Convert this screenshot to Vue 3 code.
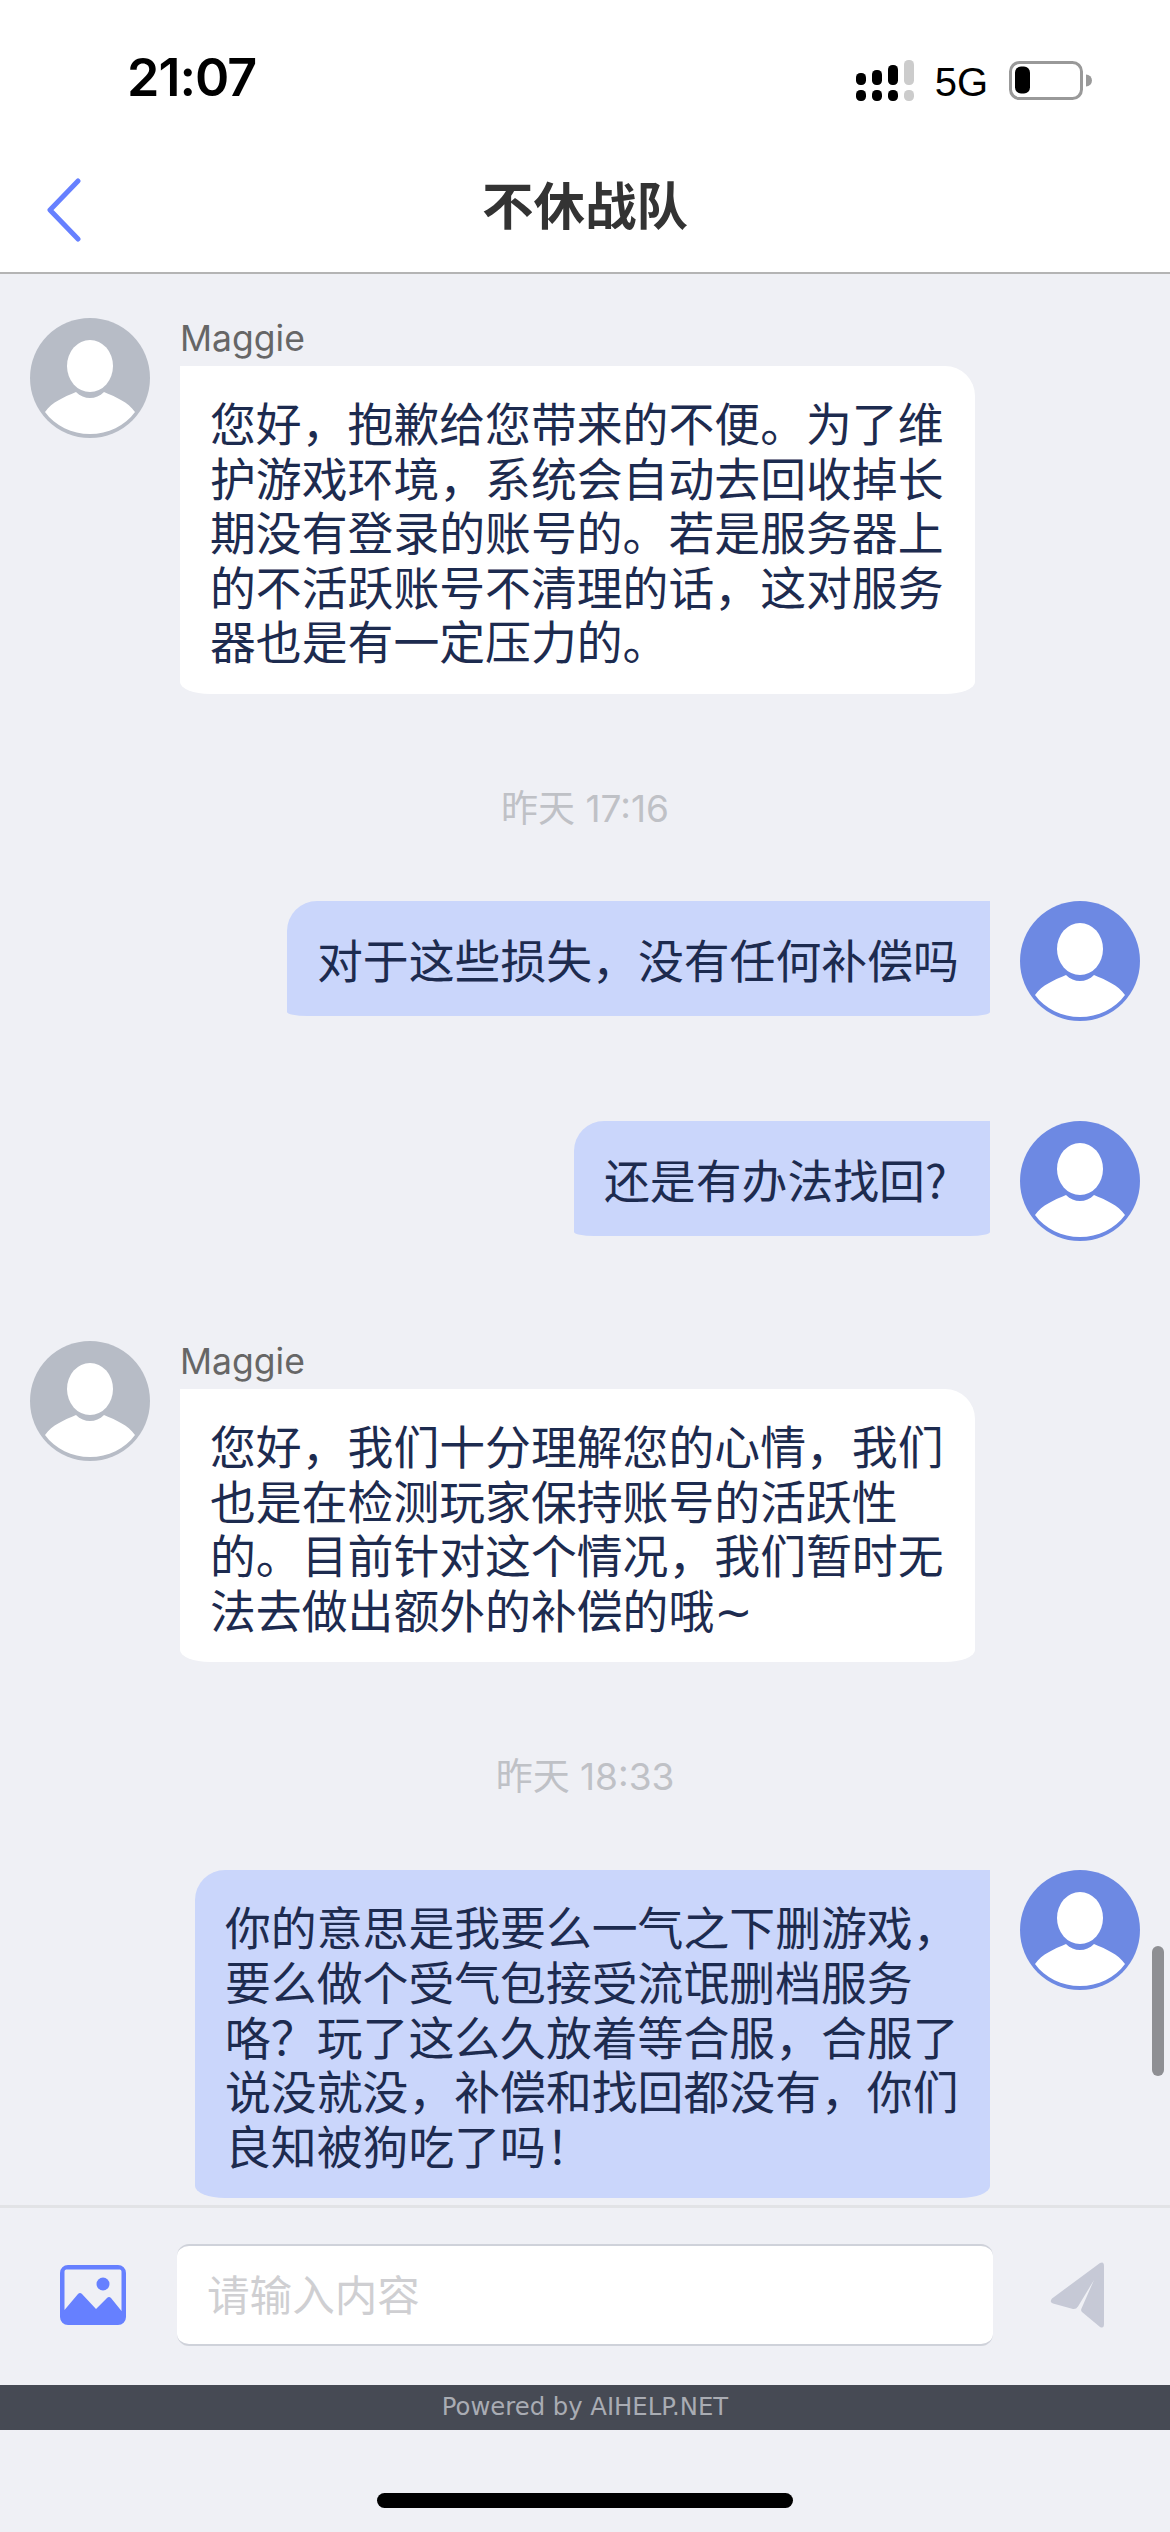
<template>
  <div class="phone">
    <!-- status bar -->
    <div class="status">
      <span class="clock">21:07</span>
      <div class="status-right">
        <svg class="signal" width="58" height="41" viewBox="0 0 58 41">
          <rect x="0" y="13" width="10" height="12" rx="4.5" fill="#000" />
          <rect x="16" y="10" width="10" height="15" rx="4.5" fill="#000" />
          <rect x="32" y="5" width="10" height="20" rx="4.5" fill="#000" />
          <rect x="48" y="0" width="10" height="25" rx="4.5" fill="#ccc" />
          <rect x="0" y="30" width="10" height="11" rx="4.5" fill="#000" />
          <rect x="16" y="30" width="10" height="11" rx="4.5" fill="#000" />
          <rect x="32" y="30" width="10" height="11" rx="4.5" fill="#000" />
          <rect x="48" y="30" width="10" height="11" rx="4.5" fill="#ccc" />
        </svg>
        <span class="net">5G</span>
        <svg class="battery" width="83" height="39" viewBox="0 0 83 39">
          <rect x="1.5" y="1.5" width="71" height="36" rx="9" fill="none" stroke="#999" stroke-width="3" />
          <rect x="6" y="5.5" width="15" height="27" rx="6" fill="#000" />
          <path d="M77 13.5a6 6 0 0 1 0 12z" fill="#999" />
        </svg>
      </div>
    </div>

    <!-- header -->
    <div class="header">
      <svg class="back" width="36" height="64" viewBox="0 0 36 64">
        <path d="M32 3 L4 32 L32 61" fill="none" stroke="#6680ff" stroke-width="5" stroke-linecap="round" stroke-linejoin="round" />
      </svg>
      <span class="title">不休战队</span>
    </div>

    <!-- chat -->
    <div class="chat">
      <template v-for="m in messages" :key="m.id">
        <div v-if="m.type === 'time'" class="time" :class="m.cls">{{ m.text }}</div>
        <div v-else-if="m.type === 'in'" class="msg in" :class="m.cls">
          <svg class="avatar" viewBox="0 0 120 120">
            <circle cx="60" cy="60" r="60" fill="#b7bcc6" />
            <ellipse cx="60" cy="48" rx="23" ry="26" fill="#fff" />
            <path d="M15 94 C22 84 34 79 46 74 C54 82 66 82 74 74 C86 79 98 84 105 94 C95 108 78 116 60 116 C42 116 25 108 15 94 Z" fill="#fff" />
          </svg>
          <div class="body">
            <div class="name">Maggie</div>
            <div class="bubble white">{{ m.text }}</div>
          </div>
        </div>
        <div v-else class="msg out" :class="m.cls">
          <div class="bubble blue" :class="{ single: m.single }" :style="{ width: m.width + 'px' }">{{ m.text }}</div>
          <svg class="avatar" viewBox="0 0 120 120">
            <circle cx="60" cy="60" r="60" fill="#6d89e3" />
            <ellipse cx="60" cy="48" rx="23" ry="26" fill="#fff" />
            <path d="M15 94 C22 84 34 79 46 74 C54 82 66 82 74 74 C86 79 98 84 105 94 C95 108 78 116 60 116 C42 116 25 108 15 94 Z" fill="#fff" />
          </svg>
        </div>
      </template>
      <div class="scrollbar"></div>
    </div>

    <!-- input -->
    <div class="composer">
      <svg class="pic" width="66" height="60" viewBox="0 0 66 60">
        <path fill-rule="evenodd" d="M8 0H58A8 8 0 0 1 66 8V52A8 8 0 0 1 58 60H8A8 8 0 0 1 0 52V8A8 8 0 0 1 8 0Z M6 4.5A2 2 0 0 0 4.5 6.5V45L18 29Q20 27 22 29L36 44L47 33Q49 31 51 33L61.5 46V6.5A2 2 0 0 0 60 4.5Z" fill="#6680ff" />
        <circle cx="43" cy="19" r="6.5" fill="#6680ff" />
      </svg>
      <div class="field">请输入内容</div>
      <svg class="send" width="54" height="66" viewBox="0 0 54 66">
        <path d="M50 1Q54 -1 54 4V62Q54 67 50 65L32 50Q30.5 48.5 31.5 46.5L44 18L28 44.5Q26 47.5 23 47L3 41.5Q-1 40 2 36.5Z" fill="#c6c9d6" />
      </svg>
    </div>

    <div class="powered">Powered by AIHELP.NET</div>

    <div class="home-area">
      <div class="home-bar"></div>
    </div>
  </div>
</template>

<script setup>
const messages = [
  { id: 1, type: 'in', cls: 'm1', text: '您好，抱歉给您带来的不便。为了维护游戏环境，系统会自动去回收掉长期没有登录的账号的。若是服务器上的不活跃账号不清理的话，这对服务器也是有一定压力的。' },
  { id: 2, type: 'time', cls: 't1', text: '昨天 17:16' },
  { id: 3, type: 'out', cls: 'm2', width: 703, single: true, text: '对于这些损失，没有任何补偿吗' },
  { id: 4, type: 'out', cls: 'm3', width: 416, single: true, text: '还是有办法找回?' },
  { id: 5, type: 'in', cls: 'm4', text: '您好，我们十分理解您的心情，我们也是在检测玩家保持账号的活跃性的。目前针对这个情况，我们暂时无法去做出额外的补偿的哦~' },
  { id: 6, type: 'time', cls: 't2', text: '昨天 18:33' },
  { id: 7, type: 'out', cls: 'm5', width: 795, text: '你的意思是我要么一气之下删游戏，要么做个受气包接受流氓删档服务咯？玩了这么久放着等合服，合服了说没就没，补偿和找回都没有，你们良知被狗吃了吗！' }
]
</script>

<style>
html, body {
  margin: 0;
  background: #eff0f5;
}
</style>

<style scoped>
.phone {
  width: 1170px;
  height: 2532px;
  display: flex;
  flex-direction: column;
  background: #eff0f5;
  overflow: hidden;
  font-family: "Noto Sans CJK SC", "Noto Sans", sans-serif;
}

/* status bar */
.status {
  height: 140px;
  background: #fff;
  display: flex;
  justify-content: space-between;
  align-items: flex-start;
  padding: 0 78px 0 127px;
  box-sizing: border-box;
}
.clock {
  margin-top: 48px;
  font-family: Inter, "Liberation Sans", sans-serif;
  font-size: 52px;
  line-height: 60px;
  font-weight: 600;
  color: #000;
  letter-spacing: -1px;
}
.status-right {
  display: flex;
  align-items: center;
  margin-top: 57px;
}
.net {
  margin-left: 21px;
  margin-top: 3px;
  font-family: "Liberation Sans", Arial, sans-serif;
  font-size: 40px;
  line-height: 44px;
  color: #000;
}
.battery {
  margin-left: 21px;
}

/* header */
.header {
  height: 134px;
  background: #fff;
  border-bottom: 2px solid #b4b4b4;
  box-sizing: border-box;
  position: relative;
  display: flex;
  align-items: center;
  justify-content: center;
  padding-bottom: 6px;
}
.back {
  position: absolute;
  left: 46px;
  top: 38px;
}
.title {
  font-size: 51.5px;
  font-weight: 700;
  color: #333;
  line-height: 60px;
}

/* chat */
.chat {
  height: 1931px;
  position: relative;
  overflow: hidden;
  padding-top: 44px;
  box-sizing: border-box;
}
.msg {
  display: flex;
  align-items: flex-start;
}
.msg.in {
  padding-left: 30px;
}
.msg.out {
  justify-content: flex-end;
  padding-right: 30px;
}
.avatar {
  width: 120px;
  height: 120px;
  flex: none;
}
.in .body {
  margin-left: 30px;
  width: 795px;
}
.name {
  font-family: Inter, "Noto Sans", sans-serif;
  font-size: 35.5px;
  line-height: 42px;
  color: #666;
  height: 48px;
}
.bubble {
  box-sizing: border-box;
  padding: 28px 28px 27px 30px;
  font-size: 45.85px;
  line-height: 54.6px;
  color: #1d2b4f;
}
.bubble.blue {
  background: #cad6fb;
  border-radius: 30px 0 30px 30px / 30px 0 12px 12px;
}
.bubble.blue.single {
  padding: 30px 28px 30px 30px;
  border-radius: 30px 0 20px 20px / 30px 0 4px 4px;
}
/* DejaVu only supplies the tilde here, the rest falls through to the CJK face */
.bubble.white {
  background: #fff;
  font-family: "DejaVu Sans", "Noto Sans CJK SC", sans-serif;
  padding: 32px 28px 23px 30px;
  border-radius: 0 30px 30px 30px / 0 30px 12px 12px;
}
.msg.out .bubble {
  margin-right: 30px;
}
.time {
  text-align: center;
  font-family: Inter, "Noto Sans CJK SC", sans-serif;
  font-size: 37px;
  line-height: 44px;
  color: #bfc1c6;
}
.t1 {
  margin-top: 93px;
}
.m2 {
  margin-top: 70px;
}
.m3 {
  margin-top: 100px;
}
.m4 {
  margin-top: 100px;
}
.t2 {
  margin-top: 93px;
}
.m5 {
  margin-top: 71px;
}
.scrollbar {
  position: absolute;
  right: 6px;
  top: 1672px;
  width: 12px;
  height: 130px;
  border-radius: 6px;
  background: #8e8f93;
}

/* input */
.composer {
  height: 180px;
  border-top: 3px solid #e2e3e6;
  box-sizing: border-box;
  display: flex;
  align-items: center;
  padding: 0 0 3px 60px;
}
.field {
  width: 816px;
  height: 102px;
  margin-left: 51px;
  padding-left: 30px;
  box-sizing: border-box;
  background: #fff;
  border-top: 2px solid #cfd2da;
  border-bottom: 2px solid #cfd2da;
  border-radius: 12px;
  font-size: 42.6px;
  line-height: 94px;
  color: #cfcfd2;
}
.send {
  margin-left: 57px;
}

.powered {
  height: 45px;
  background: #464a54;
  color: #a9acb3;
  text-align: center;
  font-family: "DejaVu Sans", sans-serif;
  font-size: 24.3px;
  line-height: 44px;
}
.home-area {
  flex: 1;
  display: flex;
  justify-content: center;
  padding-top: 63px;
}
.home-bar {
  width: 416px;
  height: 15px;
  background: #000;
  border-radius: 8px;
}
</style>
